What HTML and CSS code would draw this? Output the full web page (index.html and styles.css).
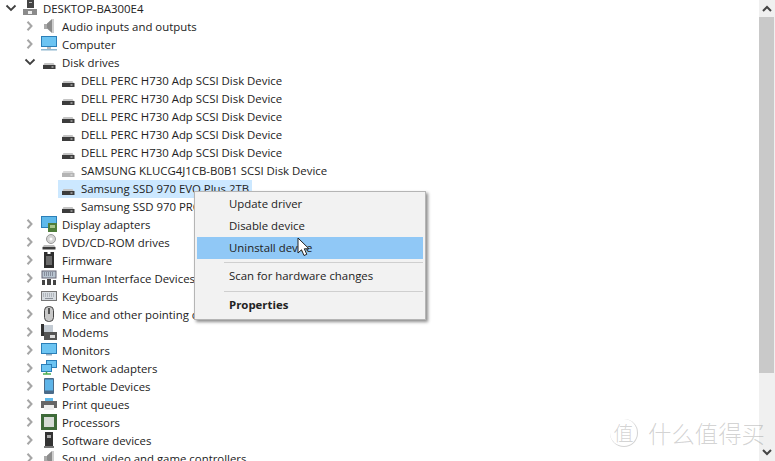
FILE: index.html
```html
<!DOCTYPE html>
<html lang="en">
<head>
  <meta charset="UTF-8">
  <title>Device Manager</title>
  <link rel="stylesheet" href="styles.css">
</head>
<body>

<svg class="defs" width="0" height="0">
  <defs>
    <symbol id="chev-right" viewBox="0 0 12 10"><path d="M3.500 .8 7.500 5l-4 4.200" fill="none" stroke="#a6a6a6" stroke-width="2"/></symbol>
    <symbol id="chev-down" viewBox="0 0 12 10"><path d="M1.500 2.500 6 7l4.500-4.500" fill="none" stroke="#404040" stroke-width="1.800"/></symbol>
    <symbol id="disk" viewBox="0 0 16 16"><path d="M3.500 9h9l1.500 2.500H2z" fill="#c4c4c4"/><rect x="2" y="11" width="12.500" height="4" fill="#3c3c3c"/><rect x="10.500" y="12.500" width="2" height="1" fill="#ddd"/></symbol>
    <symbol id="disk-light" viewBox="0 0 16 16"><path d="M3.500 9h9l1.500 2.500H2z" fill="#d8d8d8"/><rect x="2" y="11" width="12.500" height="4" fill="#b4b4b4"/><rect x="10.500" y="12.500" width="2" height="1" fill="#eee"/></symbol>
  </defs>
</svg>

<div class="window">
  <div class="tree">
    <div class="row">
      <svg class="chev"><use href="#chev-down"/></svg>
      <svg class="icon" viewBox="0 0 16 16"><rect x="5" y="0" width="7" height="8" fill="#444"/><rect x="7" y="2" width="3" height="1" fill="#bbb"/><path d="M1 9h14v6H1z" fill="#8a8a8a"/><rect x="6" y="11" width="4" height="3" fill="#eee"/></svg>
      <span>DESKTOP-BA300E4</span>
    </div>
    <div class="row lvl1">
      <svg class="chev"><use href="#chev-right"/></svg>
      <svg class="icon" viewBox="0 0 16 16"><path d="M3 6h3v5H3z" fill="#aaa"/><path d="M6 5.500 11 1v14l-5-4.500z" fill="#8c8c8c"/><path d="M11 1h2v14h-2z" fill="#cfcfcf"/></svg>
      <span>Audio inputs and outputs</span>
    </div>
    <div class="row lvl1">
      <svg class="chev"><use href="#chev-right"/></svg>
      <svg class="icon" viewBox="0 0 16 16"><rect x="0.500" y="0.500" width="15" height="10" fill="#6cc4f2" stroke="#2b7fb8"/><rect x="6" y="11" width="4" height="2" fill="#bbb"/><rect y="13" width="16" height="1.500" fill="#8fb8d0"/></svg>
      <span>Computer</span>
    </div>
    <div class="row lvl1">
      <svg class="chev"><use href="#chev-down"/></svg>
      <svg class="icon"><use href="#disk"/></svg>
      <span>Disk drives</span>
    </div>
    <div class="row lvl2"><svg class="icon"><use href="#disk"/></svg><span>DELL PERC H730 Adp SCSI Disk Device</span></div>
    <div class="row lvl2"><svg class="icon"><use href="#disk"/></svg><span>DELL PERC H730 Adp SCSI Disk Device</span></div>
    <div class="row lvl2"><svg class="icon"><use href="#disk"/></svg><span>DELL PERC H730 Adp SCSI Disk Device</span></div>
    <div class="row lvl2"><svg class="icon"><use href="#disk"/></svg><span>DELL PERC H730 Adp SCSI Disk Device</span></div>
    <div class="row lvl2"><svg class="icon"><use href="#disk"/></svg><span>DELL PERC H730 Adp SCSI Disk Device</span></div>
    <div class="row lvl2"><svg class="icon"><use href="#disk-light"/></svg><span>SAMSUNG KLUCG4J1CB-B0B1 SCSI Disk Device</span></div>
    <div class="row lvl2 selected"><svg class="icon"><use href="#disk"/></svg><span>Samsung SSD 970 EVO Plus 2TB</span></div>
    <div class="row lvl2"><svg class="icon"><use href="#disk"/></svg><span>Samsung SSD 970 PRO 1TB</span></div>
    <div class="row lvl1">
      <svg class="chev"><use href="#chev-right"/></svg>
      <svg class="icon" viewBox="0 0 16 16"><rect x="0.500" y="0.500" width="15" height="11" fill="#5fb9ea" stroke="#2b7fb8"/><rect x="7" y="7" width="9" height="9" fill="#4f7d3a"/><rect x="9" y="9" width="5" height="3" fill="#a8c48c"/></svg>
      <span>Display adapters</span>
    </div>
    <div class="row lvl1">
      <svg class="chev"><use href="#chev-right"/></svg>
      <svg class="icon" viewBox="0 0 16 16"><circle cx="10" cy="5" r="4.500" fill="#d4d4d4" stroke="#999"/><circle cx="10" cy="5" r="1.500" fill="#fff"/><path d="M3 11h10l1.500 2h-13z" fill="#bbb"/><rect x="1.500" y="13" width="13" height="2.500" fill="#3c3c3c"/></svg>
      <span>DVD/CD-ROM drives</span>
    </div>
    <div class="row lvl1">
      <svg class="chev"><use href="#chev-right"/></svg>
      <svg class="icon" viewBox="0 0 16 16"><path d="M3 0h3.500v2h3V0H13v16H3z" fill="#2e2e2e"/><rect x="5" y="4" width="6" height="9" fill="#6b6b6b"/></svg>
      <span>Firmware</span>
    </div>
    <div class="row lvl1">
      <svg class="chev"><use href="#chev-right"/></svg>
      <svg class="icon" viewBox="0 0 16 16"><rect x="1" y="1" width="14" height="7" fill="#b8c4d0" stroke="#667"/><path d="M3 3h10M3 5h10" stroke="#556" stroke-dasharray="1 1"/><path d="M1 15V10h3v5zM6 15V9h4v6zM12 15v-5h3v5z" fill="#444"/></svg>
      <span>Human Interface Devices</span>
    </div>
    <div class="row lvl1">
      <svg class="chev"><use href="#chev-right"/></svg>
      <svg class="icon" viewBox="0 0 16 16"><rect x="0.500" y="3.500" width="15" height="9" fill="#d6dbe0" stroke="#777"/><path d="M2 6h12M2 8h12" stroke="#8a9098" stroke-dasharray="1 1"/><path d="M4 10.500h8" stroke="#8a9098"/></svg>
      <span>Keyboards</span>
    </div>
    <div class="row lvl1">
      <svg class="chev"><use href="#chev-right"/></svg>
      <svg class="icon" viewBox="0 0 16 16"><rect x="3.500" y="0.500" width="9" height="15" rx="4" fill="#c8c8c8" stroke="#444"/><rect x="7" y="2" width="2" height="6" fill="#555"/></svg>
      <span>Mice and other pointing devices</span>
    </div>
    <div class="row lvl1">
      <svg class="chev"><use href="#chev-right"/></svg>
      <svg class="icon" viewBox="0 0 16 16"><rect x="0" y="0" width="3" height="12" fill="#333"/><rect x="3" y="1" width="9" height="7" fill="#c4ccd4"/><rect x="3" y="8" width="13" height="8" fill="#555"/><rect x="9" y="11" width="5" height="3" fill="#ddd"/></svg>
      <span>Modems</span>
    </div>
    <div class="row lvl1">
      <svg class="chev"><use href="#chev-right"/></svg>
      <svg class="icon" viewBox="0 0 16 16"><rect x="0.500" y="1.500" width="15" height="10" fill="#6cc4f2" stroke="#2b7fb8"/><rect x="5" y="12" width="6" height="1.500" fill="#9ab"/></svg>
      <span>Monitors</span>
    </div>
    <div class="row lvl1">
      <svg class="chev"><use href="#chev-right"/></svg>
      <svg class="icon" viewBox="0 0 16 16"><rect x="5.500" y="0.500" width="10" height="7" fill="#6cc4f2" stroke="#2b7fb8"/><rect x="0.500" y="4.500" width="10" height="7" fill="#6cc4f2" stroke="#2b7fb8"/><path d="M2 14h8M5.500 11.500V14" stroke="#4caf50" stroke-width="1.500"/></svg>
      <span>Network adapters</span>
    </div>
    <div class="row lvl1">
      <svg class="chev"><use href="#chev-right"/></svg>
      <svg class="icon" viewBox="0 0 16 16"><rect x="3" y="0" width="10" height="16" rx="1" fill="#4a6a88"/><rect x="4" y="1.500" width="8" height="11" fill="#5eb4e8"/></svg>
      <span>Portable Devices</span>
    </div>
    <div class="row lvl1">
      <svg class="chev"><use href="#chev-right"/></svg>
      <svg class="icon" viewBox="0 0 16 16"><rect x="4" y="2" width="8" height="3" fill="#5fb9ea"/><path d="M0 5h16v7h-3V9H3v3H0z" fill="#666"/><rect x="3" y="9" width="10" height="5" fill="#eee"/></svg>
      <span>Print queues</span>
    </div>
    <div class="row lvl1">
      <svg class="chev"><use href="#chev-right"/></svg>
      <svg class="icon" viewBox="0 0 16 16"><rect width="16" height="16" fill="#3f6b3a"/><rect x="3" y="3" width="10" height="10" fill="#d6dcd6"/></svg>
      <span>Processors</span>
    </div>
    <div class="row lvl1">
      <svg class="chev"><use href="#chev-right"/></svg>
      <svg class="icon" viewBox="0 0 16 16"><rect x="4" y="0" width="8" height="14" fill="#333"/><rect x="6" y="3" width="4" height="3" fill="#aaa"/><rect x="3" y="14" width="10" height="2" fill="#777"/></svg>
      <span>Software devices</span>
    </div>
    <div class="row lvl1">
      <svg class="chev"><use href="#chev-right"/></svg>
      <svg class="icon" viewBox="0 0 16 16"><path d="M3 6h3v5H3z" fill="#aaa"/><path d="M6 5.500 11 1v14l-5-4.500z" fill="#8c8c8c"/><path d="M11 1h2v14h-2z" fill="#cfcfcf"/></svg>
      <span>Sound, video and game controllers</span>
    </div>
  </div>

  <div class="scrollbar">
    <div class="arrow"><svg width="10" height="7" viewBox="0 0 10 7"><path d="M1 6 5 2l4 4" fill="none" stroke="#444" stroke-width="2"/></svg></div>
    <div class="thumb"></div>
    <div class="arrow"><svg width="10" height="7" viewBox="0 0 10 7"><path d="M1 1l4 4 4-4" fill="none" stroke="#444" stroke-width="2"/></svg></div>
  </div>

  <!-- Context menu -->
  <div class="menu">
    <div class="item">Update driver</div>
    <div class="item">Disable device</div>
    <div class="item active">Uninstall device</div>
    <div class="sep"></div>
    <div class="item scan">Scan for hardware changes</div>
    <div class="sep"></div>
    <div class="item bold">Properties</div>
  </div>

  <svg class="cursor" width="14" height="20" viewBox="0 0 14 20"><path d="M1 1v15l3.500-3.200L7 18.500l2.800-1.200-2.500-5.500H12z" fill="#fff" stroke="#222" stroke-width="1"/></svg>

  <div class="watermark">
    <span class="seal">值</span>
    <span>什么值得买</span>
  </div>
</div>

</body>
</html>
```

FILE: styles.css
```css
* {
  box-sizing: border-box;
}
html, body {
  margin: 0;
  height: 100%;
  overflow: hidden;
}
body {
  font-family: 'Open Sans', 'Noto Sans', sans-serif;
  font-size: 11.4px;
  color: #222;
  background: #fff;
}
.defs {
  display: block;
  height: 0;
}
.window {
  position: relative;
  display: flex;
  width: 775px;
  height: 461px;
  overflow: hidden;
}
/* Tree */
.tree {
  flex: 1;
  padding-left: 5px;
}
.row {
  display: flex;
  align-items: center;
  height: 18px;
  padding-bottom: 2px;
  white-space: nowrap;
}
.row.lvl1 {
  padding-left: 19px;
}
.row.lvl2 {
  padding-left: 55px;
}
.row.selected {
  width: 194px;
  margin-left: 53px;
  padding-left: 2px;
  background: #cce8ff;
}
.chev {
  width: 12px;
  height: 10px;
  margin-right: 5px;
  flex: none;
}
.icon {
  width: 16px;
  height: 16px;
  margin-right: 5px;
  flex: none;
}
/* Scrollbar */
.scrollbar {
  display: flex;
  flex-direction: column;
  width: 16px;
  background: #f0f0f0;
}
.arrow {
  display: flex;
  align-items: center;
  justify-content: center;
  height: 17px;
  flex: none;
}
.thumb {
  flex: 1;
  margin-right: 1px;
  margin-bottom: 71px;
  background: #c9c9c9;
}
/* Context menu */
.menu {
  position: absolute;
  left: 194px;
  top: 191px;
  width: 232px;
  height: 129px;
  padding: 1px 2px;
  background: #f2f2f2;
  border: 1px solid #b5b5b5;
  box-shadow: 2px 2px 3px rgba(0,0,0,0.45);
}
.item {
  height: 22px;
  line-height: 21px;
  padding-left: 32px;
  white-space: nowrap;
}
.item.active {
  background: #90c8f6;
}
.item.scan {
  height: 23px;
  line-height: 22px;
}
.item.bold {
  line-height: 22px;
  font-weight: 700;
}
.sep {
  height: 1px;
  margin: 3px 0 2px 27px;
  background: #cfcfcf;
}
.cursor {
  position: absolute;
  left: 297px;
  top: 237px;
}
/* Watermark */
.watermark {
  position: absolute;
  right: 10px;
  bottom: 11px;
  display: flex;
  align-items: center;
  gap: 10px;
  font-family: 'Noto Sans CJK SC', sans-serif;
  font-size: 23.4px;
  font-weight: 300;
  color: rgba(130,130,130,0.35);
}
.seal {
  display: flex;
  align-items: center;
  justify-content: center;
  width: 28px;
  height: 28px;
  font-size: 20px;
  border-radius: 50%;
  border-right: 1px solid rgba(130,130,130,0.35);
  border-bottom: 1px solid rgba(130,130,130,0.35);
}
```
